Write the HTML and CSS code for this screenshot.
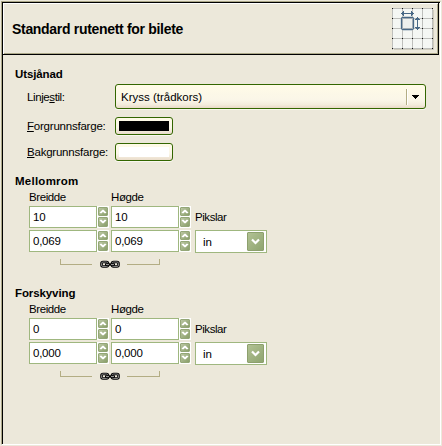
FILE: index.html
```html
<!DOCTYPE html>
<html lang="nn">
<head>
<meta charset="utf-8">
<title>Standard rutenett for bilete</title>
<link rel="stylesheet" href="styles.css">
</head>
<body>
<svg class="defs" width="0" height="0" aria-hidden="true">
  <symbol id="up" viewBox="0 0 10 9"><path d="M2 6h2V5h2v1h2V5H7V4H6V3H4v1H3v1H2z" fill="#fff" stroke="#fff" stroke-width=".4"/></symbol>
  <symbol id="down" viewBox="0 0 10 9"><path d="M2 3h2v1h2V3h2v1H7v1H6v1H4V5H3V4H2z" fill="#fff" stroke="#fff" stroke-width=".4"/></symbol>
  <symbol id="chain" viewBox="0 0 20 9">
    <g fill="none" stroke="#000" stroke-width="2.600"><rect x="1.500" y="2" width="6.500" height="4.500" rx="1.500"/><rect x="12" y="2" width="6.500" height="4.500" rx="1.500"/></g>
    <g fill="none" stroke="#a5a5a5" stroke-width=".8"><rect x="1.500" y="2" width="6.500" height="4.500" rx="1.500"/><rect x="12" y="2" width="6.500" height="4.500" rx="1.500"/></g>
    <path d="M5 4.500h10" stroke="#000" stroke-width="2.400"/><path d="M6 4.500h3M11 4.500h3" stroke="#bbb" stroke-width=".8"/>
  </symbol>
</svg>
<main class="window">
  <header class="header">
    <h1>Standard rutenett for bilete</h1>
    <svg class="grid-icon" width="44" height="44" viewBox="0 0 44 44" shape-rendering="crispEdges">
      <path d="M2 2h40v40H2z" fill="#cfccbd"/>
      <path d="M1 1h40v40H1z" fill="#f5f7f4"/>
      <path d="M.5 .5v41M10.500 .5v41M20.500 .5v41M30.500 .5v41M40.500 .5v41M0 .5h41M0 10.500h41M0 20.500h41M0 30.500h41M0 40.500h41" stroke="#bebfbc"/>
      <path d="M0 .5h41M0 10.500h41M0 20.500h41M0 30.500h41M0 40.500h41" stroke="#111" stroke-dasharray="1 9"/>
      <rect x="9.500" y="9.500" width="12" height="12" rx="1.500" fill="#eef0ee" stroke="#486886" stroke-width="1.300" shape-rendering="auto"/>
      <path d="M10.500 11v10M20.500 11v10M10 10.500h11M10 20.500h11" stroke="#a3acb3"/>
      <path d="M9.500 5.500h12M25.500 9.500v12" stroke="#486886"/>
      <path d="M9 5h1V4h1V3h1v5h-1V7h-1V6H9zM22 5h-1V4h-1V3h-1v5h1V7h1V6h1zM25 9h1v1h1v1h1v1h-5v-1h1v-1h1zM25 22h1v-1h1v-1h1v-1h-5v1h1v1h1z" fill="#486886"/>
    </svg>
  </header>

  <section class="appearance">
    <h2 class="h-look">Utsjånad</h2>
    <div class="row combo-row"><label class="l1">Linje<u>s</u>til:</label>
      <div class="combo"><span>Kryss (trådkors)</span><i class="divider"></i>
        <svg width="7" height="4" viewBox="0 0 7 4" shape-rendering="crispEdges"><path d="M0 0h7v1H6v1H5v1H4v1H3V3H2V2H1V1H0z"/></svg>
      </div>
    </div>
    <div class="row color-row"><label class="l2"><u>F</u>orgrunnsfarge:</label><button class="color"><i class="black"></i></button></div>
    <div class="row color-row"><label class="l3"><u>B</u>akgrunnsfarge:</label><button class="color"><i class="white"></i></button></div>
  </section>

  <section class="size">
    <h2 class="h-space">Mellomrom</h2>
    <div class="heads"><span>Breidde</span><span>Høgde</span></div>
    <div class="fields">
      <div class="spin"><span class="field">10</span><span class="arrows"><b><svg><use href="#up"/></svg></b><b><svg><use href="#down"/></svg></b></span></div>
      <div class="spin"><span class="field">10</span><span class="arrows"><b><svg><use href="#up"/></svg></b><b><svg><use href="#down"/></svg></b></span></div>
      <span class="unit">Pikslar</span>
      <div class="spin"><span class="field">0,069</span><span class="arrows"><b><svg><use href="#up"/></svg></b><b><svg><use href="#down"/></svg></b></span></div>
      <div class="spin"><span class="field">0,069</span><span class="arrows"><b><svg><use href="#up"/></svg></b><b><svg><use href="#down"/></svg></b></span></div>
      <div class="select"><span>in</span><b><svg width="9" height="7" viewBox="0 0 9 7"><path d="M1 1.500l3.500 3.500L8 1.500" fill="none" stroke="#fff" stroke-width="2.200"/></svg></b></div>
    </div>
    <div class="link"><i class="left"></i><svg width="20" height="9"><use href="#chain"/></svg><i class="right"></i></div>
  </section>

  <section class="size">
    <h2 class="h-offset">Forskyving</h2>
    <div class="heads"><span>Breidde</span><span>Høgde</span></div>
    <div class="fields">
      <div class="spin"><span class="field">0</span><span class="arrows"><b><svg><use href="#up"/></svg></b><b><svg><use href="#down"/></svg></b></span></div>
      <div class="spin"><span class="field">0</span><span class="arrows"><b><svg><use href="#up"/></svg></b><b><svg><use href="#down"/></svg></b></span></div>
      <span class="unit">Pikslar</span>
      <div class="spin"><span class="field">0,000</span><span class="arrows"><b><svg><use href="#up"/></svg></b><b><svg><use href="#down"/></svg></b></span></div>
      <div class="spin"><span class="field">0,000</span><span class="arrows"><b><svg><use href="#up"/></svg></b><b><svg><use href="#down"/></svg></b></span></div>
      <div class="select"><span>in</span><b><svg width="9" height="7" viewBox="0 0 9 7"><path d="M1 1.500l3.500 3.500L8 1.500" fill="none" stroke="#fff" stroke-width="2.200"/></svg></b></div>
    </div>
    <div class="link"><i class="left"></i><svg width="20" height="9"><use href="#chain"/></svg><i class="right"></i></div>
  </section>
</main>
</body>
</html>
```
FILE: styles.css
```css
* { box-sizing: border-box; }
html, body { margin: 0; height: 100%; overflow: hidden; }
body {
  padding: 1px;
  background: #ece8da;
  color: #000;
  font: 11.5px/14px "Liberation Sans", Arial, sans-serif;
}
.defs { position: absolute; }
.window {
  width: 440px;
  height: 444px;
  border: 1px solid;
  border-color: #aca888 #fff #fff #aca888;
  box-shadow: inset 1px 1px #000;
}
.header {
  display: flex;
  align-items: flex-start;
  justify-content: space-between;
  width: 437px;
  height: 53px;
  padding: 6px 2px 0 9px;
  border: 1px solid #000;
  box-shadow: inset 1px 1px #fff, inset -1px -1px #aca888;
}
h1 { margin: 11px 0 0; font-size: 14px; line-height: 18px; font-weight: bold; letter-spacing: -0.31px; white-space: nowrap; }
.grid-icon { margin-top: -1px; }
h2 { margin: 0; font-size: 11.5px; line-height: 14px; font-weight: bold; }
.h-look { letter-spacing: -0.1px; }
.h-space { letter-spacing: 0.25px; }
.h-offset { letter-spacing: -0.1px; }
.appearance { padding: 12px 0 0 13px; }
.row { display: flex; align-items: center; padding-left: 12px; }
.row label { width: 88px; white-space: nowrap; }
.l1 { letter-spacing: -0.4px; }
.l2, .l3 { letter-spacing: -0.22px; }
u { text-decoration: underline; text-underline-offset: 1px; }
.combo-row { margin-top: 3px; }
.combo {
  display: flex;
  align-items: center;
  width: 311px;
  height: 25px;
  padding: 0 6px 0 5px;
  border: 1px solid #336600;
  border-radius: 3px;
  background: linear-gradient(#fffbe7, #faf6e8 65%, #f3ecdc 85%, #e9dac8);
  box-shadow: 0 1px #faf8ef;
}
.combo span { flex: 1; }
.divider { width: 2px; height: 16px; margin-right: 4px; border-left: 1px solid #b3ad84; border-right: 1px solid #fff; }
.color-row { margin-top: 8px; }
.color {
  width: 58px;
  height: 18px;
  padding: 3px;
  border: 1px solid #336600;
  border-radius: 3px;
  background: linear-gradient(#fffbe7, #faf6e8 60%, #eadccb);
  box-shadow: 0 1px #faf8ef;
}
.color i { display: block; height: 10px; }
.black { background: #000; }
.white { background: #fff; }
.size { height: 112px; padding-left: 13px; }
.appearance + .size { margin-top: 13px; }
.heads { display: flex; margin: 2px 0 0 14px; height: 15px; letter-spacing: -0.4px; }
.heads span { width: 82px; }
.fields { display: grid; grid-template-columns: 80px 82px 72px; column-gap: 2px; grid-template-rows: 22px 23px; row-gap: 2px; margin: 1px 0 0 14px; align-items: start; }
.spin { display: flex; height: 22px; }
.field { width: 68px; padding: 3px 0 0 3px; border: 1px solid #9fb77f; background: #fff; letter-spacing: -0.25px; }
.arrows { width: 12px; padding: 1px; display: grid; gap: 1px; grid-template-rows: 9px 10px; background: #fff; }
.arrows b { border: 1px solid #94a777; border-radius: 1px; background: linear-gradient(135deg, #bbc7a3, #899e69); }
.arrows svg { display: block; width: 10px; height: 9px; margin: -1px; }
.unit { margin-top: 4px; letter-spacing: -0.45px; }
.select { display: flex; height: 23px; border: 1px solid #9fb77f; background: #fff; padding: 1px 2px 1px 7px; justify-content: space-between; }
.select span { padding-top: 3px; }
.select b { display: grid; place-items: center; width: 17px; height: 19px; border: 1px solid #8da06d; border-radius: 1px; background: linear-gradient(135deg, #b1c193, #8fa570); }
.link { display: flex; align-items: flex-start; margin: 6px 0 0 45px; }
.link i { height: 6px; border-bottom: 1px solid #b3ad84; }
.link svg { margin: 1px 7px 0 8px; }
.left { width: 32px; border-left: 1px solid #b3ad84; }
.right { width: 33px; border-right: 1px solid #b3ad84; }
```
